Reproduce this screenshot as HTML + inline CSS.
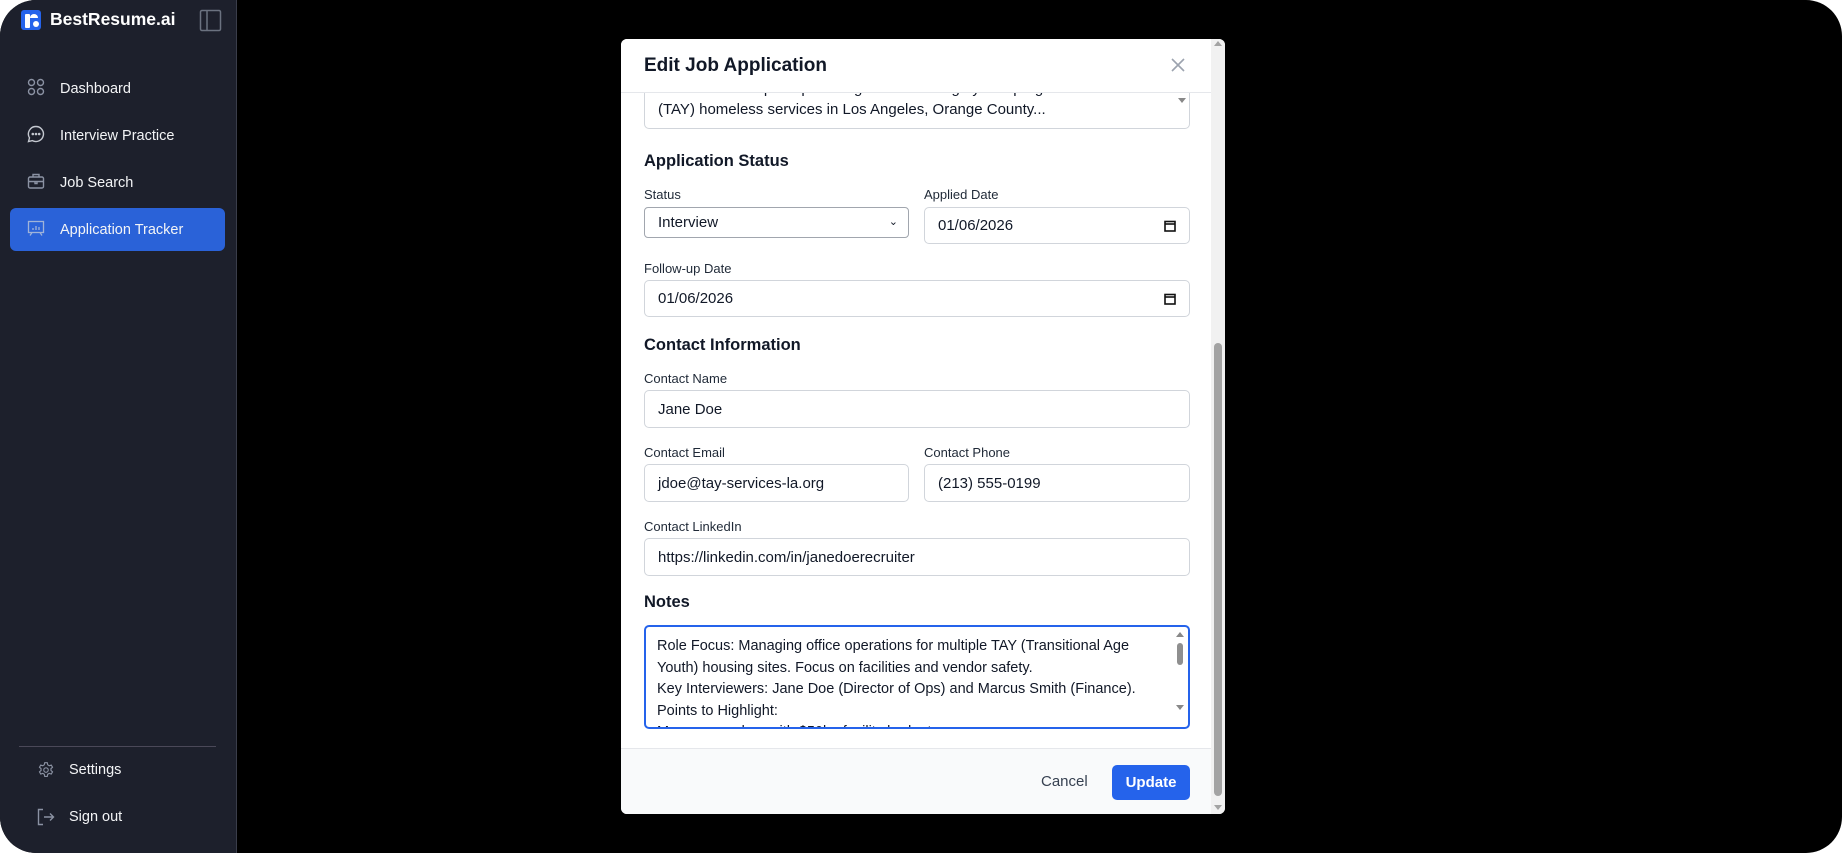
<!DOCTYPE html>
<html><head><meta charset="utf-8"><style>
*{box-sizing:border-box;margin:0;padding:0}
body{width:1842px;height:853px;background:#fff;font-family:"Liberation Sans",Arial,sans-serif;overflow:hidden;position:relative}
.frame{position:absolute;left:0;top:0;width:1842px;height:853px;background:#000;border-radius:36px;overflow:hidden}
.side{position:absolute;left:0;top:0;width:237px;height:853px;background:#1d202c;border-right:1px solid #3a3d4a}
.abs{position:absolute}
.nav{position:absolute;left:10px;width:215px;height:43px;border-radius:6px;color:#f3f4f6;font-size:14.5px;display:flex;align-items:center;padding-left:50px}
.nav svg{position:absolute;left:17px;top:11px}
.modal{position:absolute;left:621px;top:39px;width:604px;height:775px;background:#fff;border-radius:6px;overflow:hidden}
.lbl{position:absolute;font-size:13px;color:#1f2937;font-weight:500}
.h{position:absolute;font-size:16.5px;color:#111827;font-weight:600}
.inp{position:absolute;border:1px solid #d1d5db;border-radius:5px;background:#fff;font-size:15px;color:#111827;padding-left:13px;display:flex;align-items:center}
</style></head><body>
<div class="frame">
<div class="side">
  <div class="abs" style="left:21px;top:10px;width:20px;height:20px;background:#2563eb;border-radius:3px"></div>
  <div class="abs" style="left:25px;top:14px;width:5px;height:14px;background:#fff;border-radius:1px"></div>
  <div class="abs" style="left:30px;top:14px;width:8px;height:6px;border-top:4px solid #fff;border-radius:4px 4px 0 0"></div>
  <div class="abs" style="left:33px;top:21px;width:6px;height:6px;background:#fff;border-radius:50%"></div>
  <div class="abs" style="left:50px;top:9px;font-size:17.5px;font-weight:700;color:#fff">BestResume.ai</div>
  <svg class="abs" style="left:199px;top:9px" width="23" height="23" viewBox="0 0 23 23"><rect x="1.5" y="1.5" width="20" height="20" rx="1.5" fill="none" stroke="#6b7280" stroke-width="1.5"/><line x1="8" y1="2" x2="8" y2="21" stroke="#6b7280" stroke-width="1.5"/></svg>

  <div class="nav" style="top:67px"><svg width="18" height="18" viewBox="0 0 18 18" fill="none" stroke="#8b92a3" stroke-width="1.4"><circle cx="4.5" cy="4.5" r="3"/><circle cx="13.5" cy="4.5" r="3"/><circle cx="4.5" cy="13.5" r="3"/><circle cx="13.5" cy="13.5" r="3"/></svg>Dashboard</div>
  <div class="nav" style="top:114px"><svg width="18" height="18" viewBox="0 0 18 18" fill="none" stroke="#c4c8d0" stroke-width="1.4"><path d="M9 1.5a7.5 7.5 0 1 1-3.6 14.1L1.5 16.5l1-3.6A7.5 7.5 0 0 1 9 1.5z"/><circle cx="5.8" cy="9" r=".6" fill="#c4c8d0"/><circle cx="9" cy="9" r=".6" fill="#c4c8d0"/><circle cx="12.2" cy="9" r=".6" fill="#c4c8d0"/></svg>Interview Practice</div>
  <div class="nav" style="top:161px"><svg width="18" height="18" viewBox="0 0 18 18" fill="none" stroke="#8b92a3" stroke-width="1.4"><rect x="1.5" y="5" width="15" height="11" rx="1.5"/><path d="M6 5V2.5h6V5M1.5 9.5h15M8 9.5v2h2v-2"/></svg>Job Search</div>
  <div class="nav" style="top:208px;background:#2a62d8"><svg width="18" height="18" viewBox="0 0 18 18" fill="none" stroke="#9fb3d9" stroke-width="1.3"><rect x="1.5" y="2.5" width="15" height="11"/><path d="M6 11V9M9 11V7M12 11V8M5 13.5l-2 3M13 13.5l2 3"/></svg>Application Tracker</div>

  <div class="abs" style="left:19px;top:746px;width:197px;height:1px;background:#4a4858"></div>
  <div class="abs" style="left:37px;top:761px;width:18px;height:18px"><svg width="18" height="18" viewBox="0 0 24 24" fill="none" stroke="#8b92a3" stroke-width="1.5"><path d="M10.3 2.3h3.4l.6 2.8 2 1.2 2.7-.9 1.7 2.9-2.1 1.9v2.4l2.1 1.9-1.7 2.9-2.7-.9-2 1.2-.6 2.8h-3.4l-.6-2.8-2-1.2-2.7.9-1.7-2.9 2.1-1.9v-2.4L3.3 8.3 5 5.4l2.7.9 2-1.2z"/><circle cx="12" cy="12" r="3"/></svg></div>
  <div class="abs" style="left:69px;top:762px;font-size:14.5px;color:#f3f4f6">Settings</div>
  <div class="abs" style="left:37px;top:808px"><svg width="18" height="18" viewBox="0 0 18 18" fill="none" stroke="#8b92a3" stroke-width="1.4"><path d="M6 1.5H1.5v15H6M7 9h9.5M13 5.5 16.5 9 13 12.5"/></svg></div>
  <div class="abs" style="left:69px;top:809px;font-size:14.5px;color:#f3f4f6">Sign out</div>
</div>

<div class="modal">
  <div class="abs" style="left:0;top:0;width:590px;height:54px;border-bottom:1px solid #e5e7eb;background:#fff;z-index:2"></div>
  <div class="abs" style="left:23px;top:16px;font-size:19px;font-weight:700;color:#111827;z-index:3">Edit Job Application</div>
  <svg class="abs" style="left:550px;top:19px;z-index:3" width="14" height="14" viewBox="0 0 14 14" stroke="#9ca3af" stroke-width="1.6"><path d="M1 1l12 12M13 1L1 13"/></svg>

  <div class="abs" style="left:23px;top:20px;width:546px;height:70px;border:1px solid #d1d5db;border-radius:5px;overflow:hidden;font-size:15px;line-height:21px;color:#111827;padding:18px 30px 0 13px">Veteran-led nonprofit providing transitional age youth programs.<br>(TAY) homeless services in Los Angeles, Orange County...
    <div class="abs" style="right:3px;top:38px;width:0;height:0;border-left:4px solid transparent;border-right:4px solid transparent;border-top:5px solid #888"></div>
  </div>

  <div class="h" style="left:23px;top:113px">Application Status</div>
  <div class="lbl" style="left:23px;top:148px">Status</div>
  <div class="inp" style="left:23px;top:168px;width:265px;height:31px;border-color:#a1a6ae;border-radius:4px">Interview<span style="position:absolute;right:10px;top:7px;font-size:11px">&#8964;</span></div>
  <div class="lbl" style="left:303px;top:148px">Applied Date</div>
  <div class="inp" style="left:303px;top:168px;width:266px;height:37px">01/06/2026<svg style="position:absolute;right:13px;top:12px" width="12" height="12" viewBox="0 0 12 12" fill="none" stroke="#111" stroke-width="1.6"><rect x="1" y="1.5" width="10" height="9.5"/><line x1="1" y1="4" x2="11" y2="4"/></svg></div>

  <div class="lbl" style="left:23px;top:222px">Follow-up Date</div>
  <div class="inp" style="left:23px;top:241px;width:546px;height:37px">01/06/2026<svg style="position:absolute;right:13px;top:12px" width="12" height="12" viewBox="0 0 12 12" fill="none" stroke="#111" stroke-width="1.6"><rect x="1" y="1.5" width="10" height="9.5"/><line x1="1" y1="4" x2="11" y2="4"/></svg></div>

  <div class="h" style="left:23px;top:297px">Contact Information</div>
  <div class="lbl" style="left:23px;top:332px">Contact Name</div>
  <div class="inp" style="left:23px;top:351px;width:546px;height:38px">Jane Doe</div>
  <div class="lbl" style="left:23px;top:406px">Contact Email</div>
  <div class="inp" style="left:23px;top:425px;width:265px;height:38px">jdoe@tay-services-la.org</div>
  <div class="lbl" style="left:303px;top:406px">Contact Phone</div>
  <div class="inp" style="left:303px;top:425px;width:266px;height:38px">(213) 555-0199</div>
  <div class="lbl" style="left:23px;top:480px">Contact LinkedIn</div>
  <div class="inp" style="left:23px;top:499px;width:546px;height:38px">https://linkedin.com/in/janedoerecruiter</div>

  <div class="h" style="left:23px;top:554px">Notes</div>
  <div class="abs" style="left:23px;top:586px;width:546px;height:104px;border:2px solid #2563eb;border-radius:5px;overflow:hidden;font-size:14.5px;line-height:21.5px;color:#111827;padding:9px 40px 0 11px">Role Focus: Managing office operations for multiple TAY (Transitional Age Youth) housing sites. Focus on facilities and vendor safety.<br>Key Interviewers: Jane Doe (Director of Ops) and Marcus Smith (Finance).<br>Points to Highlight:<br>Manage vendors with $50k+ facility budgets.
    <div class="abs" style="right:2px;top:2px;width:12px;height:96px;background:#fff">
      <div style="position:absolute;left:2px;top:3px;width:0;height:0;border-left:4px solid transparent;border-right:4px solid transparent;border-bottom:5px solid #888"></div>
      <div style="position:absolute;left:3px;top:14px;width:6px;height:22px;background:#8f8f8f;border-radius:3px"></div>
      <div style="position:absolute;left:2px;top:76px;width:0;height:0;border-left:4px solid transparent;border-right:4px solid transparent;border-top:5px solid #888"></div>
    </div>
  </div>

  <div class="abs" style="left:0;top:709px;width:590px;height:66px;background:#f9fafb;border-top:1px solid #e5e7eb"></div>
  <div class="abs" style="left:420px;top:734px;font-size:15px;color:#374151">Cancel</div>
  <div class="abs" style="left:491px;top:726px;width:78px;height:35px;background:#2563eb;border-radius:5px;color:#fff;font-size:15px;font-weight:600;display:flex;align-items:center;justify-content:center">Update</div>

  <div class="abs" style="left:590px;top:0;width:14px;height:775px;background:#f1f1f1"></div>
  <div class="abs" style="left:593px;top:304px;width:8px;height:453px;background:#a3a3a3;border-radius:4px"></div>
  <div class="abs" style="left:593px;top:2px;width:0;height:0;border-left:4px solid transparent;border-right:4px solid transparent;border-bottom:5px solid #a3a3a3"></div>
  <div class="abs" style="left:593px;top:766px;width:0;height:0;border-left:4px solid transparent;border-right:4px solid transparent;border-top:5px solid #a3a3a3"></div>
</div>
</div>
</body></html>
